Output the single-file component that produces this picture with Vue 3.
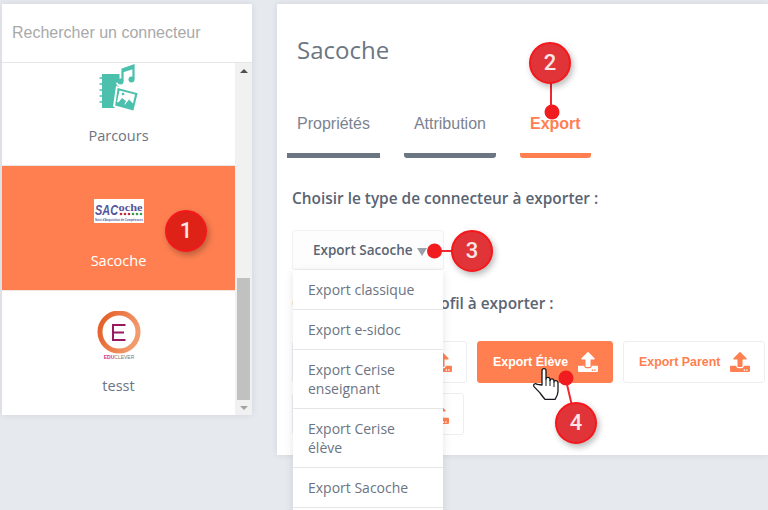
<script setup>
const connectors = [
  { name: 'Parcours', logo: 'parcours' },
  { name: 'Sacoche', logo: 'sacoche', active: true },
  { name: 'tesst', logo: 'educlever' },
]
const exportTypes = [
  'Export classique',
  'Export e-sidoc',
  'Export Cerise enseignant',
  'Export Cerise élève',
  'Export Sacoche',
]
const profiles = [
  { label: 'Export Enseignant' },
  { label: 'Export Élève', active: true },
  { label: 'Export Parent' },
  { label: 'Export Personnels' },
]
const tabs = [
  { label: 'Propriétés', cls: 'first' },
  { label: 'Attribution' },
  { label: 'Export', cls: 'active' },
]
const uploadPath = 'M296 384h-80c-13.3 0-24-10.7-24-24V192h-87.7c-17.8 0-26.7-21.5-14.1-34.1L242.3 5.7c7.5-7.5 19.8-7.5 27.3 0l152.2 152.2c12.6 12.6 3.7 34.1-14.1 34.1H320v168c0 13.3-10.7 24-24 24zm216-8v112c0 13.3-10.7 24-24 24H24c-13.3 0-24-10.7-24-24V376c0-13.3 10.7-24 24-24h136v8c0 30.9 25.1 56 56 56h80c30.9 0 56-25.1 56-56v-8h136c13.3 0 24 10.7 24 24zm-124 88c0-11-9-20-20-20s-20 9-20 20 9 20 20 20 20-9 20-20zm64 0c0-11-9-20-20-20s-20 9-20 20 9 20 20 20 20-9 20-20z'
</script>

<template>
  <div class="page">
    <aside class="sidebar">
      <div class="search">Rechercher un connecteur</div>
      <div class="list-wrap">
        <div class="list">
          <div
            v-for="c in connectors"
            :key="c.name"
            class="item"
            :class="{ active: c.active }"
          >
            <div class="logo">
              <svg v-if="c.logo === 'parcours'" width="50" height="50" viewBox="0 0 50 50">
                <path d="M8 13h17.500v12l-5 22H8z" fill="#4bc0ad" />
                <path d="M5.500 17h4M5.500 23h4M5.500 29h4M5.500 35h4M5.500 41h4" stroke="#4bc0ad" stroke-width="1.400" />
                <path d="M24 21.500a3 3 0 1 0 5-2.500" fill="#fff" stroke="#fff" stroke-width="4" />
                <circle cx="26.500" cy="20.500" r="3" fill="#4bc0ad" />
                <circle cx="37.500" cy="18.500" r="3" fill="#4bc0ad" />
                <path d="M28.500 20V8.500l11-4V18" fill="none" stroke="#4bc0ad" stroke-width="2.200" />
                <path d="M28.500 7.500l11-3.500v4l-11 3.500z" fill="#4bc0ad" />
                <path d="M22 25l23.500 6-5 20.500-21.500-6z" fill="#fff" />
                <path d="M23.600 27l20 5.200-4.200 17.300-18.200-5.100z" fill="#4bc0ad" />
                <path d="M25.500 29.500l15.500 4-2 9-4-4-4 5-8-2.500z" fill="#fff" />
                <path d="M24 42l4-5 4 3-2 4z" fill="#4bc0ad" />
                <circle cx="29" cy="33" r="1.300" fill="#4bc0ad" />
              </svg>
              <svg v-else-if="c.logo === 'sacoche'" width="50" height="24" viewBox="0 0 50 24">
                <rect width="50" height="24" fill="#fff" />
                <text x="1" y="16" class="sac" textLength="23" lengthAdjust="spacingAndGlyphs">SAC</text>
                <text x="24.500" y="12" class="oche" textLength="24" lengthAdjust="spacingAndGlyphs">oche</text>
                <g fill="#b8323a">
                  <circle cx="27" cy="15" r="1.300" />
                  <circle cx="31" cy="15" r="1.300" />
                  <circle cx="35" cy="15" r="1.300" />
                </g>
                <g fill="#3d9a4c">
                  <circle cx="39" cy="15" r="1.300" />
                  <circle cx="43" cy="15" r="1.300" />
                  <circle cx="47" cy="15" r="1.300" />
                </g>
                <text x="1" y="21.500" class="sac-sub" textLength="48" lengthAdjust="spacingAndGlyphs">Suivi d'Acquisition de Compétences</text>
              </svg>
              <svg v-else width="50" height="50" viewBox="0 0 50 50">
                <defs>
                  <linearGradient id="ring" x1="0" y1="0" x2="1" y2="0.4">
                    <stop offset="0" stop-color="#e25a24" />
                    <stop offset="1" stop-color="#f29a6b" />
                  </linearGradient>
                </defs>
                <circle cx="25" cy="21" r="19" fill="none" stroke="url(#ring)" stroke-width="5" />
                <path d="M31.500 14h-12.500v15h12.500M19 21.500h11" fill="none" stroke="#97195f" stroke-width="2" />
                <text x="25" y="47.500" text-anchor="middle" class="edu"><tspan fill="#d9357f" font-weight="700">EDU</tspan><tspan fill="#777">CLEVER</tspan></text>
              </svg>
            </div>
            <div class="name">{{ c.name }}</div>
          </div>
        </div>
        <div class="scrollbar">
          <span class="arrow up"></span>
          <span class="thumb"></span>
          <span class="arrow down"></span>
        </div>
      </div>
    </aside>

    <main class="panel">
      <h1 class="title">Sacoche</h1>
      <nav class="tabs">
        <div v-for="t in tabs" :key="t.label" class="tab" :class="t.cls">{{ t.label }}</div>
      </nav>

      <p class="label type-label">Choisir le type de connecteur à exporter :</p>
      <div class="select">
        <button class="select-btn">Export Sacoche <span class="caret"></span></button>
        <ul class="dropdown">
          <li v-for="e in exportTypes" :key="e">{{ e }}</li>
          <li class="cut"></li>
        </ul>
      </div>

      <p class="label profile-label">Choisir le type de profil à exporter :</p>
      <div class="profiles">
        <button v-for="p in profiles" :key="p.label" class="profile" :class="{ active: p.active }">
          {{ p.label }}
          <svg width="20" height="20" viewBox="0 0 512 512"><path :d="uploadPath" fill="currentColor" /></svg>
        </button>
      </div>
    </main>

    <svg class="hand" width="32" height="40" viewBox="0 0 32 40">
      <path d="M12 21V6.500c0-2.600 4-2.600 4 0V15c.4-2.300 4-2.300 4 .4v1c.4-2.200 4-2.200 4 .5v1c.5-2 4-1.600 4 1v8c0 4-1.500 6-3 8.500H15c-1.500-2-3.500-4-5-6.500l-5.800-6c-1.800-2.200.8-4.200 3-2.500z" fill="#fff" stroke="#16181d" stroke-width="1.300" stroke-linejoin="round" />
      <path d="M16 15v7M20 16v6M24 18v5" fill="none" stroke="#16181d" stroke-width="1" />
    </svg>

    <svg class="lines" width="768" height="510" viewBox="0 0 768 510">
      <g stroke="#ee2a30" stroke-width="2">
        <path d="M551 80v32" />
        <path d="M434 251h24" />
        <path d="M566 380l6 26" />
      </g>
      <g fill="#f01c20">
        <circle cx="552" cy="112" r="7.500" />
        <circle cx="434.500" cy="251" r="7.500" />
        <circle cx="566" cy="378" r="7.500" />
      </g>
    </svg>
    <div class="badge b1">1</div>
    <div class="badge b2">2</div>
    <div class="badge b3">3</div>
    <div class="badge b4">4</div>
  </div>
</template>

<style>
body {
  background: #e6e9ee;
}
</style>

<style scoped>
.page {
  position: relative;
  display: flex;
  align-items: flex-start;
  gap: 25px;
  width: 768px;
  height: 510px;
  padding: 4px 0 0 2px;
  box-sizing: border-box;
  overflow: hidden;
  background: #e6e9ee;
  font-family: "Open Sans", sans-serif;
}

.sidebar {
  flex: 0 0 250px;
  height: 411px;
  display: flex;
  flex-direction: column;
  background: #fff;
  box-shadow: 0 0 6px rgba(60, 70, 90, 0.12);
}

.search {
  height: 59px;
  flex: none;
  box-sizing: border-box;
  padding: 19px 0 0 10px;
  border-bottom: 1px solid #e6e6e6;
  font: 16px/20px "Liberation Sans", Arial, sans-serif;
  color: #a9a9a9;
}

.list-wrap {
  flex: 1;
  min-height: 0;
  display: flex;
}

.list {
  flex: 1;
  min-width: 0;
  overflow: hidden;
}

.item {
  height: 125px;
  box-sizing: border-box;
  padding-top: 20px;
  border-bottom: 1px solid #e6e6e6;
  text-align: center;
}

.item:first-child {
  margin-top: -22px;
}

.item.active {
  background: #ff7f50;
  border-bottom-color: #f2e6e0;
}

.logo {
  height: 50px;
  display: flex;
  align-items: center;
  justify-content: center;
}

.sac {
  font: italic 700 15px "Liberation Sans", sans-serif;
  fill: #55559c;
}

.oche {
  font: 700 11px "Liberation Serif", serif;
  fill: #55559c;
}

.sac-sub {
  font: 700 3px "Liberation Sans", sans-serif;
  fill: #55559c;
}

.edu {
  font: 5px "Liberation Sans", sans-serif;
}

.name {
  margin-top: 15px;
  font-size: 14.500px;
  line-height: 20px;
  color: #6c7483;
}

.item.active .name {
  color: #fff;
}

.scrollbar {
  flex: 0 0 17px;
  display: flex;
  flex-direction: column;
  align-items: center;
  padding: 6px 0 5px;
  box-sizing: border-box;
  background: #f1f1f1;
}

.arrow {
  width: 0;
  height: 0;
  border-left: 4px solid transparent;
  border-right: 4px solid transparent;
}

.arrow.up {
  border-bottom: 4px solid #505050;
}

.arrow.down {
  margin-top: 6px;
  border-top: 4px solid #a3a3a3;
}

.thumb {
  width: 13px;
  height: 122px;
  margin-top: auto;
  background: #c1c1c1;
}

.panel {
  flex: 1;
  height: 451px;
  min-width: 0;
  background: #fff;
  box-shadow: 0 0 6px rgba(60, 70, 90, 0.12);
}

.title {
  margin: 0;
  padding: 29px 0 0 20px;
  font-size: 24px;
  font-weight: 400;
  line-height: 34px;
  color: #6c7683;
}

.tabs {
  display: flex;
  gap: 24px;
  margin: 47px 0 0 10px;
}

.tab {
  box-sizing: border-box;
  height: 44px;
  padding: 0 10px;
  border-bottom: 5px solid #6c7683;
  border-radius: 0 0 3px 3px;
  font: 16px/20px "Liberation Sans", Arial, sans-serif;
  color: #7b8390;
}

.tab.first {
  border-radius: 0;
}

.tab.active {
  border-bottom-color: #ff7f50;
  color: #ff7f50;
  font-weight: 700;
}

.label {
  margin: 0 0 0 15px;
  font-size: 15.400px;
  font-weight: 600;
  line-height: 20px;
  color: #5a6473;
}

.type-label {
  margin-top: 31px;
}

.select {
  position: relative;
  width: 152px;
  margin: 21px 0 0 15px;
}

.select-btn {
  display: block;
  width: 100%;
  height: 40px;
  padding: 0 0 0 20px;
  box-sizing: border-box;
  border: 1px solid #eef0f3;
  border-radius: 3px;
  background: #fdfdfd;
  text-align: left;
  font: 600 13.500px "Open Sans", sans-serif;
  color: #5a6473;
}

.caret {
  display: inline-block;
  width: 0;
  height: 0;
  margin-left: 1px;
  border-left: 5px solid transparent;
  border-right: 5px solid transparent;
  border-top: 8px solid #9aa1ab;
  vertical-align: -1px;
}

.dropdown {
  position: absolute;
  top: 40px;
  left: 1px;
  width: 150px;
  margin: 0;
  padding: 0;
  list-style: none;
  background: #fff;
  box-shadow: 0 2px 8px rgba(60, 70, 90, 0.14);
  z-index: 2;
  font-size: 14px;
  line-height: 19px;
  color: #6c7483;
}

.dropdown li {
  padding: 10px 15px;
  border-bottom: 1px solid #e6e6e6;
}

.dropdown li.cut {
  height: 19px;
}

.profile-label {
  margin-top: 24px;
}

.profiles {
  display: flex;
  flex-wrap: wrap;
  gap: 10px;
  margin: 27px 0 0 15px;
}

.profile {
  display: flex;
  align-items: center;
  justify-content: space-between;
  gap: 10px;
  height: 42px;
  padding: 0 14px 0 15px;
  box-sizing: border-box;
  border: 1px solid #eceef2;
  border-radius: 3px;
  background: #fff;
  font: 700 12.400px "Liberation Sans", Arial, sans-serif;
  color: #ff7f50;
}

.profile:first-child {
  width: 175px;
}

.profile:last-child {
  width: 172px;
}

.profile.active {
  border-color: #ff7f50;
  background: #ff7f50;
  color: #fff;
}

.hand {
  position: absolute;
  left: 530px;
  top: 364px;
  z-index: 3;
}

.lines {
  position: absolute;
  left: 0;
  top: 0;
  z-index: 4;
  pointer-events: none;
}

.badge {
  position: absolute;
  z-index: 5;
  width: 42px;
  height: 42px;
  box-sizing: border-box;
  border: 2px solid #f5171b;
  border-radius: 50%;
  background: #e03438;
  box-shadow: 2px 3px 6px rgba(0, 0, 0, 0.28);
  text-align: center;
  font: 500 22px/38px Roboto, Arial, sans-serif;
  color: #fbe6e6;
}

.b1 { left: 165px; top: 210px; background: #df2218; }
.b2 { left: 529px; top: 42px; }
.b3 { left: 451px; top: 230px; }
.b4 { left: 555px; top: 402px; }
</style>
